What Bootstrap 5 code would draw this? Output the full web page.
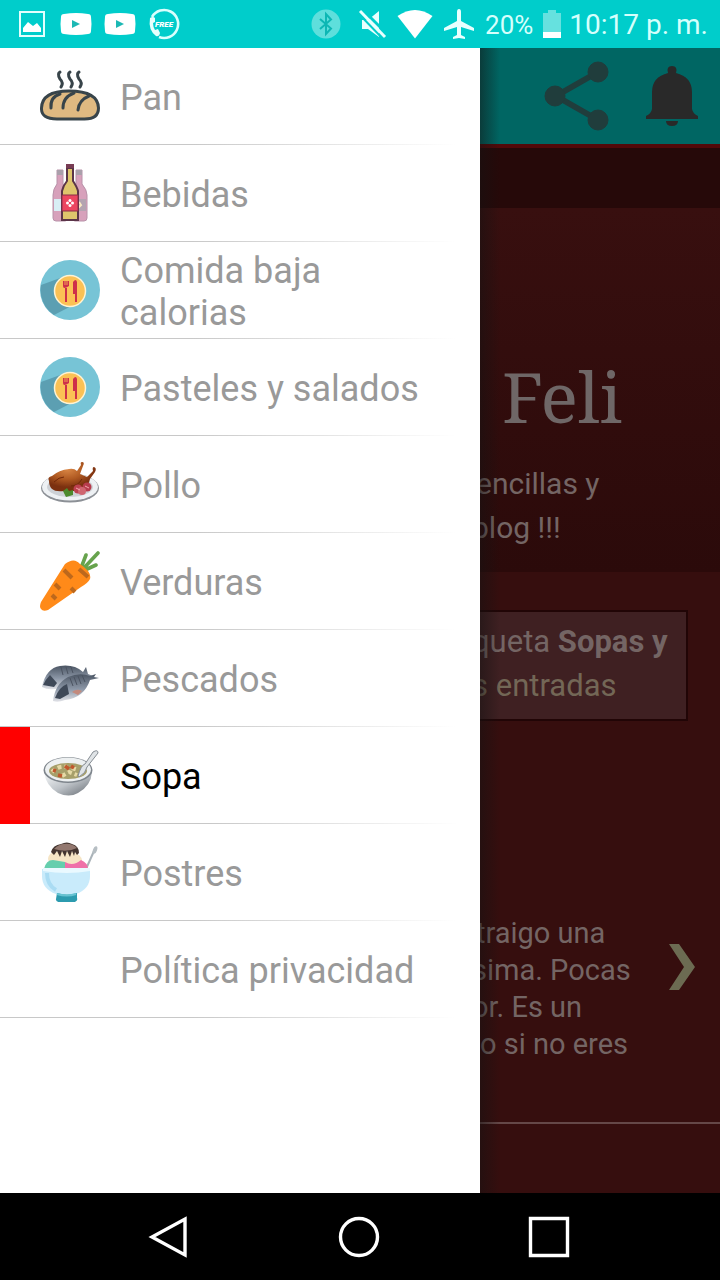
<!DOCTYPE html>
<html lang="es">
<head>
<meta charset="utf-8">
<meta name="viewport" content="width=device-width, initial-scale=1">
<title>Recetas Feli</title>
<link href="https://cdn.jsdelivr.net/npm/bootstrap@5.3.0/dist/css/bootstrap.min.css" rel="stylesheet">
<style>
body{font-family:Roboto,"Noto Sans",sans-serif;background:#360e0e}
svg{display:block;flex:none}
.status-bar{height:48px;background:#00cdcb;color:#d5fffc;padding:0 12px 0 18px}
.status-left{gap:12px}
.status-left svg:first-child{margin-right:2px}
.status-right{gap:10px}
.status-right svg:first-child{margin-right:6px}
.pct,.clock{line-height:46px;padding-top:2px}
.pct{font-size:26px}
.clock{font-size:28px;margin-left:-2px}
.drawer{background:#fff}
.drawer-link{display:flex;align-items:center;gap:20px;height:97px;padding:2px 30px 0 40px;
  font-size:36px;line-height:42px;color:#999;text-decoration:none;
  background:linear-gradient(90deg,#c8c8c8 40%,#fff 95%) bottom/100% 1px no-repeat}
.drawer-link.current{color:#000;padding-left:10px;border-left:30px solid red}
.thumb{width:60px;height:60px;flex:none;margin-bottom:4px}
.page-pane{background:#360e0e;color:#746564;overflow:hidden}
.page-pane::before{content:"";position:absolute;inset:0 auto 0 0;width:20px;background:linear-gradient(90deg,rgba(20,18,18,.5),transparent)}
.tool-row{height:100px;background:#006663;border-bottom:4px solid #520909;padding-right:20px;gap:30px}
.tool-row button{background:none;border:0;padding:0}
.strip{height:60px;background:#260909}
.hero{height:364px;background:linear-gradient(#380f0f,#2b0a0a);padding-top:144px}
.blog-title{font:400 70px/88px "Noto Serif","Liberation Serif",serif;color:#6f6767;margin:0;padding-left:22px}
.intro{font-size:30px;line-height:44px;padding-top:22px}
.cut-s{margin-left:-4px}
.cut-m{margin-left:-8px}
.notice{margin:38px 32px 0 0;height:111px;border:2px solid #210506;border-left:0;background:#3f2022;font-size:31px;line-height:44px;padding-top:8px}
.notice a{color:#736756;text-decoration:none}
.post{margin-top:194px;height:209px;border-bottom:2px solid #654848;padding-right:24px;font-size:29px;line-height:37px}
.next-link{margin-top:28px}
.nav-keys{height:87px;background:#000}
.nav-keys button{width:190px;max-width:30%;background:none;border:0;padding:0}
</style>
</head>
<body>
<div class="d-flex flex-column min-vh-100">
  <header class="status-bar d-flex align-items-center justify-content-between">
    <div class="status-left d-flex align-items-center">
      <svg width="28" height="28" viewBox="0 0 28 28"><path d="M2 2h24v24H2z" fill="none" stroke="#e2fffd" stroke-width="2"/><path d="M5 22v-4l5-6 5 4 4-3 4 5v4z" fill="#fff"/></svg>
      <svg width="32" height="24" viewBox="0 0 32 24"><path d="M4 2Q16 0 28 2q3 0 3 3 1 7 0 14 0 3-3 3Q16 24 4 22q-3 0-3-3Q0 12 1 5q0-3 3-3z" fill="#fff"/><path d="M12 8v8l8-4z" fill="#1cb8b4"/></svg>
      <svg width="32" height="24" viewBox="0 0 32 24"><path d="M4 2Q16 0 28 2q3 0 3 3 1 7 0 14 0 3-3 3Q16 24 4 22q-3 0-3-3Q0 12 1 5q0-3 3-3z" fill="#fff"/><path d="M12 8v8l8-4z" fill="#1cb8b4"/></svg>
      <svg width="32" height="32" viewBox="0 0 32 32"><path d="M4 9A14 14 0 1 1 11 29" fill="none" stroke="#d9fffd" stroke-width="2.6"/><path d="M2 10q3-2 5 0v4l-2 1q0 4 2 7l3-1 2 4q-1 4-4 3Q0 22 2 10z" fill="#e6fffd"/><text x="7" y="19" font-size="8" font-weight="900" font-style="italic" fill="#fff">FREE</text></svg>
    </div>
    <div class="status-right d-flex align-items-center">
      <svg width="30" height="30" viewBox="0 0 30 30"><circle cx="15" cy="15" r="14.500" fill="#5edfdc"/><path d="M9 10 20 19.500 15 25V5l5 5.500L9 20" fill="none" stroke="#0cb7b4" stroke-width="2"/></svg>
      <svg width="30" height="30" viewBox="0 0 30 30"><path d="M5 11h6l11-9v26L11 20H5z" fill="#e9fffe"/><path d="M5 0 32 27" stroke="#00cdcb" stroke-width="3"/><path d="M3 2 28 28" stroke="#e9fffe" stroke-width="3"/><path d="M1 4 26 30" stroke="#00cdcb" stroke-width="2"/></svg>
      <svg width="36" height="30" viewBox="0 0 36 30"><path d="M18 29.500 0.500 7Q18-5 35.500 7z" fill="#fff"/></svg>
      <svg width="32" height="32" viewBox="0 0 32 32"><path d="M16 1q2 0 2 3v9l13 7v3l-13-4v8l4 2v2l-6-1-6 1v-2l4-2v-8L1 23v-3l13-7V4q0-3 2-3z" fill="#e9fffe"/></svg>
      <span class="pct">20%</span>
      <svg width="18" height="30" viewBox="0 0 18 30"><path d="M0 4h5V1h8v3h5v25H0z" fill="#66e1df"/><path d="M0 23h18v6H0z" fill="#fff"/></svg>
      <span class="clock">10:17 p. m.</span>
    </div>
  </header>

  <main class="row g-0 flex-fill">
    <nav class="drawer col-8" aria-label="Categorías">
      <a class="drawer-link" href="#"><svg class="thumb" viewBox="0 0 60 60"><path d="M17 53Q1 53 1.500 42 2 25 29 25q29 0 29.500 17 0 11-14 11z" fill="#dfb981" stroke="#38444a" stroke-width="3"/><path d="M20 28q-10 3-9 14M34 27q-11 4-11 15M49 30q-10 4-11 14M20 6q-3 2 0 7 4 4 1 8M30 6q-3 2 0 7 4 4 1 8M39 6q-3 2 0 7 4 4 1 8" fill="none" stroke="#38444a" stroke-width="3" stroke-linecap="round"/></svg>Pan</a>
      <a class="drawer-link" href="#"><svg class="thumb" viewBox="0 0 60 60"><g fill="#d7a1bb" stroke="#b892a9"><path d="M17 7h6v14q5 6 5 11v23q0 3-3 3H16q-3 0-3-3V32q0-6 4-11zM36 7h6v14q5 6 5 11v23q0 3-3 3h-9q-3 0-3-3V32q0-6 4-11z"/></g><path d="M17 7h6v5h-6zM36 7h6v5h-6z" fill="#aaa0ab"/><path d="M14 36h9v12h-9z" fill="#d8eef5"/><path d="M37 36h9v12h-9z" fill="#b4a4b1"/><path d="m39 39 2 3-3 3" fill="none" stroke="#fae9c1" stroke-width="2"/><path d="M27 5h6v13q4 6 5 10v29H22V28q1-5 5-10z" fill="#dfc56c" stroke="#5b3549" stroke-width="2"/><path d="M26 1h8v4h-8z" fill="#783c54"/><path d="M22 32h16v16H22z" fill="#ec4660" stroke="#8b2c48"/><g fill="#fff"><circle cx="30" cy="37.500" r="1.500"/><circle cx="30" cy="42.500" r="1.500"/><circle cx="27.500" cy="40" r="1.500"/><circle cx="32.500" cy="40" r="1.500"/></g></svg>Bebidas</a>
      <a class="drawer-link" href="#"><svg class="thumb" viewBox="0 0 60 60"><circle cx="30" cy="30" r="30" fill="#77c4d6"/><path d="M23 17 1 25a30 30 0 0 0 13 30l29-15z" fill="#5c9fb2"/><circle cx="30" cy="31" r="15.500" fill="#fbc155" stroke="#fff3d3" stroke-width="1.500"/><path d="M23 21v5q0 4 6 0v-5zM25 28h2v14h-2z" fill="#ce304a"/><path d="M25 20v5M27 20v5" stroke="#fbc155" stroke-width=".8"/><path d="M33 22q3-4 4 0v20h-2v-8h-2z" fill="#ce304a"/></svg>Comida baja calorias</a>
      <a class="drawer-link" href="#"><svg class="thumb" viewBox="0 0 60 60"><circle cx="30" cy="30" r="30" fill="#77c4d6"/><path d="M23 17 1 25a30 30 0 0 0 13 30l29-15z" fill="#5c9fb2"/><circle cx="30" cy="31" r="15.500" fill="#fbc155" stroke="#fff3d3" stroke-width="1.500"/><path d="M23 21v5q0 4 6 0v-5zM25 28h2v14h-2z" fill="#ce304a"/><path d="M25 20v5M27 20v5" stroke="#fbc155" stroke-width=".8"/><path d="M33 22q3-4 4 0v20h-2v-8h-2z" fill="#ce304a"/></svg>Pasteles y salados</a>
      <a class="drawer-link" href="#"><svg class="thumb" viewBox="0 0 60 60"><defs><radialGradient id="roast" cx=".4" cy=".25" r=".6"><stop stop-color="#d98645"/><stop offset=".55" stop-color="#b05a22"/><stop offset="1" stop-color="#7b300f"/></radialGradient></defs><ellipse cx="30" cy="34" rx="29" ry="14.500" fill="#8c9096"/><ellipse cx="30" cy="33" rx="28" ry="13.500" fill="#eef1f4"/><ellipse cx="30" cy="33" rx="23" ry="10" fill="#cdd1d6"/><path d="M9 27q-2-4 3-5 7-6 17-7 5-1 8 2l4-6q-1-3 1-3 3 0 1 4l-3 8 7 3 6-6q-1-4 1-4 3 1 1 5l-5 7q-1 7-8 9-10 5-18 3Q9 39 9 27z" fill="url(#roast)"/><path d="M14 28q5-5 10-5M31 32q7 0 11-7" fill="none" stroke="#702709"/><path d="m23 37 4-3 2 3 4-1v5l-7 2z" fill="#4c8a2d"/><circle cx="38" cy="35" r="4.500" fill="#bd4150"/><circle cx="47" cy="33" r="4.500" fill="#b73b4c"/><circle cx="42" cy="37" r="4" fill="#cf6670"/><path d="m36 34 4 2m5-4 4 2" stroke="#f2a9ac"/></svg>Pollo</a>
      <a class="drawer-link" href="#"><svg class="thumb" viewBox="0 0 60 60"><path d="M41 17 46 4M43 18 58 2M45 19 56 14" stroke="#67a34d" stroke-width="3.600" stroke-linecap="round"/><path d="M25 13Q34 6 40 13q12 8 10 15-2 4-9 8L8 59q-5 2-7-1-2-2 0-7z" fill="#ff8a19"/><path d="m24 19 8 8M39 18l9 8M15 33l5 5M31 37l4 4M12 44l4 4" stroke="#bd681c" stroke-width="4"/></svg>Verduras</a>
      <a class="drawer-link" href="#"><svg class="thumb" viewBox="0 0 60 60"><defs><linearGradient id="scale" x2="0" y2="1"><stop stop-color="#4b5563"/><stop offset=".55" stop-color="#8d98a8"/><stop offset="1" stop-color="#e2e3e8"/></linearGradient></defs><path d="M2 39Q6 20 20 18q14-2 23 6l3-5 2 7 5 2-9 3q-10 10-24 9Q9 43 2 39z" fill="url(#scale)"/><path d="m17 35-7-8q-5 5-7 10l11 2z" fill="#3f4958"/><path d="M13 53Q15 36 28 29q12-5 22-1l6-2-2 3 5 1-9 2q-6 18-25 20-7 3-12 1z" fill="url(#scale)"/><path d="m29 46-2-10q-8 3-12 14l5 1z" fill="#3f4958"/><path d="m21 19 2 8m3-8 2 7m3-7 2 6m-3 5 3 8m1-9 3 8m1-9 3 8m1-9 3 7" stroke="#4b5361"/><path d="M32 44q5-4 10-1l-4 4z" fill="#c38a7d"/></svg>Pescados</a>
      <a class="drawer-link current" href="#" aria-current="page"><svg class="thumb" viewBox="0 0 60 60"><defs><linearGradient id="bowl" x2="1" y2="1"><stop stop-color="#f8fafb"/><stop offset=".5" stop-color="#bfc4c9"/><stop offset="1" stop-color="#62686f"/></linearGradient></defs><path d="M4 27q2 14 14 21 11 5 20 0 13-7 14-21z" fill="url(#bowl)"/><ellipse cx="28" cy="25" rx="24.500" ry="13" fill="#7e858c"/><ellipse cx="28" cy="24.500" rx="23" ry="12" fill="#edf0f1"/><ellipse cx="28" cy="26" rx="19" ry="8" fill="#a69f6a"/><path d="M12 27q7-7 15-5M22 31l7-4 8 3M32 23l6 2" fill="none" stroke="#e5d9a6" stroke-width="4" stroke-dasharray="4 3"/><path d="m18 30 4 1m3-10 4 3m2-3 3 2M13 25l3 1" stroke="#c0572c" stroke-width="3.500"/><path d="M38 31q3-11 7-12l8-12q5-3 5 1L47 22q-1 6-8 10z" fill="#dfe3e6" stroke="#858c93"/></svg>Sopa</a>
      <a class="drawer-link" href="#"><svg class="thumb" viewBox="0 0 60 60"><path d="m46 27 8-18" stroke="#aab3b9" stroke-width="2"/><ellipse cx="55" cy="8" rx="2" ry="4" transform="rotate(20 55 8)" fill="#b6bec3"/><path d="M8 17q0-5 6-7h20q7 3 8 8l-4 6H10z" fill="#f6e5c5"/><path d="M4 27q2-9 9-9l12 2v7z" fill="#65cead"/><path d="M25 20q8 5 16-2 7 3 7 9H25z" fill="#ef70a9"/><path d="M11 10q2-7 10-8 6-3 11 0 7 2 7 9l-2 2-2-3-1 4-2-5-2 6-3-6-2 6-3-6-2 6-3-6-3 4z" fill="#44352f"/><path d="M14 7q5-5 10-5 8-1 13 4-10 5-23 1z" fill="#93786f"/><path d="M2 27h48v7q0 13-14 18H16Q2 47 2 34z" fill="#c9ebfb"/><path d="M3 26h47v3q-23 4-47 0z" fill="#eaf9ff"/><path d="M7 31q0 12 9 17" fill="none" stroke="#aadcf3" stroke-width="4"/><path d="M17 51q10 3 20 0v5q2 5-10 5t-11-4z" fill="#2c9baf"/><path d="M17 52q10 3 19 0" fill="none" stroke="#66c3d2" stroke-width="2"/></svg>Postres</a>
      <a class="drawer-link" href="#"><span class="thumb"></span>Política privacidad</a>
    </nav>

    <section class="page-pane col-4 position-relative">
      <div class="tool-row d-flex align-items-center justify-content-end">
        <button type="button" aria-label="Compartir"><svg width="70" height="72" viewBox="0 0 70 72"><g fill="#203d3c" stroke="#203d3c"><path d="M54 12 12 36l42 24" fill="none" stroke-width="6"/><circle cx="54" cy="12" r="10"/><circle cx="11" cy="36" r="10"/><circle cx="54" cy="60" r="10"/></g></svg></button>
        <button type="button" aria-label="Notificaciones"><svg width="56" height="64" viewBox="0 0 56 64"><path d="M24 9q-2-7 4-7t4 7q16 4 16 19v17q1 5 6 7v3H2v-3q5-2 6-7V28Q8 13 24 9zM22 57h12q0 5-6 5t-6-5z" fill="#292929"/></svg></button>
      </div>
      <div class="strip"></div>
      <div class="hero text-nowrap">
        <h1 class="blog-title">Feli</h1>
        <div class="intro"><div class="cut-s">encillas y</div><div class="cut-m">blog !!!</div></div>
      </div>
      <div class="notice text-nowrap"><div class="cut-m">queta <b>Sopas y</b></div><div class="cut-m"><a href="#">s entradas</a></div></div>
      <article class="post d-flex justify-content-between text-nowrap">
        <div><div class="cut-s">traigo una</div><div class="cut-m">sima. Pocas</div><div class="cut-m">or. Es un</div><div>o si no eres</div></div>
        <a class="next-link" href="#" aria-label="Siguiente"><svg width="28" height="48" viewBox="0 0 28 48"><path d="M1 1h10l16 23-16 23H1l15-23z" fill="#6c6b52"/></svg></a>
      </article>
    </section>
  </main>

  <footer class="nav-keys d-flex align-items-center justify-content-center">
    <button type="button" aria-label="Atrás"><svg class="mx-auto" width="44" height="44" viewBox="0 0 44 44"><path d="M37 4v36L4 22z" fill="none" stroke="#fff" stroke-width="3.400"/></svg></button>
    <button type="button" aria-label="Inicio"><svg class="mx-auto" width="44" height="44" viewBox="0 0 44 44"><circle cx="21" cy="22" r="18.500" fill="none" stroke="#fff" stroke-width="3.400"/></svg></button>
    <button type="button" aria-label="Recientes"><svg class="mx-auto" width="44" height="44" viewBox="0 0 44 44"><path d="M2.500 3.500h37v37h-37z" fill="none" stroke="#fff" stroke-width="3.400"/></svg></button>
  </footer>
</div>
<script src="https://cdn.jsdelivr.net/npm/bootstrap@5.3.0/dist/js/bootstrap.bundle.min.js"></script>
</body>
</html>
